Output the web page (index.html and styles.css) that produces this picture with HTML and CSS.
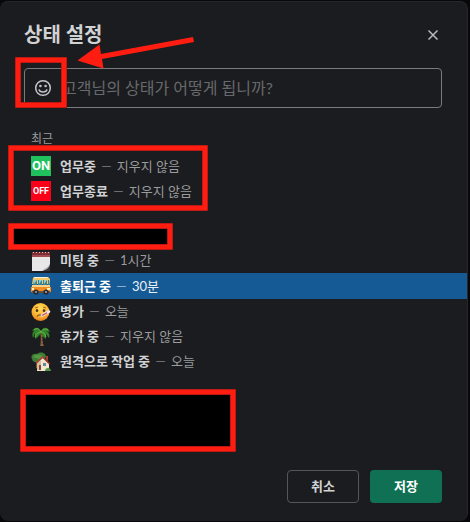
FILE: index.html
```html
<!DOCTYPE html>
<html lang="ko">
<head>
<meta charset="utf-8">
<title>상태 설정</title>
<link rel="stylesheet" href="styles.css">
</head>
<body>
<main class="dialog">
  <header class="header">
    <h1 class="title">상태 설정</h1>
    <button class="close" type="button" aria-label="닫기">
      <svg width="12" height="12" viewBox="0 0 12 12"><path d="M1.5 1.5l9 9M10.5 1.5l-9 9"/></svg>
    </button>
  </header>

  <div class="field">
    <button class="picker" type="button" aria-label="이모티콘 선택">
      <svg width="18" height="18" viewBox="0 0 18 18">
        <circle class="line" cx="9" cy="9" r="7.3"/>
        <circle class="dot" cx="6.4" cy="7" r="1.3"/>
        <circle class="dot" cx="11.6" cy="7" r="1.3"/>
        <path class="line" d="M5 10.3c.7 3.6 7.3 3.6 8 0"/>
      </svg>
    </button>
    <input class="input" type="text" aria-label="상태" placeholder="고객님의 상태가 어떻게 됩니까?">
  </div>

  <h2 class="group">최근</h2>
  <ul class="list">
    <li><button class="row" type="button">
      <span class="badge on">ON</span>
      <span class="label"><strong>업무중</strong> <span class="dash">—</span> 지우지 않음</span>
    </button></li>
    <li><button class="row" type="button">
      <span class="badge off">OFF</span>
      <span class="label"><strong>업무종료</strong> <span class="dash">—</span> 지우지 않음</span>
    </button></li>
  </ul>

  <ul class="list presets">
    <li><button class="row" type="button">
      <svg class="emoji" viewBox="0 0 20 20">
        <path fill="#e9e8e9" d="M1 4h18v16H1z"/>
        <path fill="#7e2d35" d="M1 1h18v4H1z"/>
        <path fill="#a34b52" d="M1 4h18v2H1z"/>
        <path stroke="#d8c8cb" stroke-width="1" stroke-dasharray="1 2" d="M2 1.5h16"/>
        <path fill="#34363a" d="M19 13v7h-8c3-1 3-2 4-2 2-1 3-3 4-5z"/>
        <path fill="#b9b9bc" d="M10 20c4-1 3-3 5-3 2-1 3-3 4-4-1 4-3 6-9 7z"/>
      </svg>
      <span class="label"><strong>미팅 중</strong> <span class="dash">—</span> 1시간</span>
    </button></li>
    <li><button class="row selected" type="button">
      <svg class="emoji" viewBox="0 0 20 20">
        <path fill="#f4c869" d="M3 1h14l2 2v5H1l1-6z"/>
        <path fill="#eef0e4" d="M3 1h13l1 1H3z"/>
        <path fill="#3b8295" d="M3 4h3v6H2zM7 4h4v6H7zM12 4h4v6h-4zM17 4h1l1 6h-2z"/>
        <path fill="#8bd1d8" d="M3 4h3L3 8zM8 4h3L8 8zM13 4h3l-3 4z"/>
        <path fill="#f7d48b" d="M1 9h18v3H1z"/>
        <path fill="#f28b20" d="M0 11h20v5H0z"/>
        <path fill="#fff0b2" d="M1 12h2v2H1zM16 12h3v2h-3z"/>
        <path fill="#665047" d="M1 15h18v2H1z"/>
        <circle cx="5" cy="16" r="2.6" fill="#25282d"/><circle cx="5" cy="16" r="1.1" fill="#9ba1a8"/>
        <circle cx="15" cy="16" r="2.6" fill="#25282d"/><circle cx="15" cy="16" r="1.1" fill="#9ba1a8"/>
      </svg>
      <span class="label"><strong>출퇴근 중</strong> <span class="dash">—</span> 30분</span>
    </button></li>
    <li><button class="row" type="button">
      <svg class="emoji" viewBox="0 0 20 20">
        <defs><radialGradient id="face" cx=".5" cy=".3" r=".7"><stop offset="0" stop-color="#ffdc55"/><stop offset=".65" stop-color="#fbb532"/><stop offset="1" stop-color="#e67a19"/></radialGradient></defs>
        <circle cx="9.5" cy="10" r="9" fill="url(#face)"/>
        <path fill="none" stroke="#a65f1c" d="M4 6l3-1M12 5l3 1"/>
        <ellipse cx="6" cy="8.5" rx="1.3" ry="1.5" fill="#59331c"/>
        <ellipse cx="13" cy="8.5" rx="1.3" ry="1.5" fill="#59331c"/>
        <path fill="none" stroke="#93501d" stroke-width="1.3" d="M6 14.5c1.5-2 4-2 5.500-.5"/>
        <path stroke="#e9e3ef" stroke-width="2.6" stroke-linecap="round" d="M11 13.5l7-4"/>
        <path stroke="#d5424b" stroke-width="1.2" d="M11 13.5l5-2.8"/>
      </svg>
      <span class="label"><strong>병가</strong> <span class="dash">—</span> 오늘</span>
    </button></li>
    <li><button class="row" type="button">
      <svg class="emoji" viewBox="0 0 20 20">
        <path fill="#765034" d="M9 6h3c-1 4-1 9 1 13H9c1-4 1-9 0-13z"/>
        <path stroke="#a7794f" d="M10 9h1.500M10 12h1.500M10 15h1.500M10 18h2"/>
        <path fill="#34842b" d="M10 5C8-1 3 0 1 4l3-1c-3 2-3 5-2 8l2-5v6c2-1 4-3 6-6 1 3 3 5 5 6V7l3 4c1-3 0-6-3-7l4 1c-2-5-7-6-9 0z"/>
        <path fill="none" stroke="#68b945" d="M10 5C8 1 5 1 3 3M10 5c-3 0-5 2-6 5M10 5c2-4 5-3 7-2M10 5c3 0 4 2 5 5"/>
      </svg>
      <span class="label"><strong>휴가 중</strong> <span class="dash">—</span> 지우지 않음</span>
    </button></li>
    <li><button class="row" type="button">
      <svg class="emoji" viewBox="0 0 20 20">
        <path fill="#3d7d34" d="M1 7c-2-4 2-6 5-5 4-3 9-1 9 3l-6 5c-3 1-7 1-8-3z"/>
        <path fill="#579845" d="M2 5c2-3 5-2 7-2l3 1-4 3z"/>
        <path fill="#775138" d="M5 9h2v7H5z"/>
        <path fill="#f3e6cf" d="M6 11l6-5 6 6v7H6z"/>
        <path fill="#d6bb9c" d="M6 11l4-3v10H6z"/>
        <path fill="none" stroke="#b34135" stroke-width="1.4" d="M5.500 11l6-6 7 7"/>
        <path fill="#a8433b" d="M15 4h2v5l-2-2z"/>
        <path fill="#7d4a3a" d="M8 13h2v5H8z"/>
        <path fill="#5f88a0" d="M12 11h3v3h-3z"/>
        <path fill="#529344" d="M14 19c0-4 6-4 6 0z"/>
      </svg>
      <span class="label"><strong>원격으로 작업 중</strong> <span class="dash">—</span> 오늘</span>
    </button></li>
  </ul>

  <footer class="footer">
    <button class="btn cancel" type="button">취소</button>
    <button class="btn save" type="button">저장</button>
  </footer>

  <svg class="marks" width="470" height="522" viewBox="0 0 470 522" aria-hidden="true">
    <path fill="#000" d="M11 226h160v22H11zM23 392h210v57H23z"/>
    <g class="edge">
      <rect x="18" y="60" width="46" height="45"/>
      <rect x="11" y="148" width="194" height="60"/>
      <rect x="11" y="226" width="159" height="21"/>
      <rect x="23" y="392" width="210" height="57"/>
    </g>
    <g class="mark">
      <rect x="18" y="60" width="46" height="45"/>
      <rect x="11" y="148" width="194" height="60"/>
      <rect x="11" y="226" width="159" height="21"/>
      <rect x="23" y="392" width="210" height="57"/>
    </g>
    <path class="arrow" d="M77.500 60.500L99.500 44.500l1.500 9.500 92-17 1 5-92 17 1.500 9.500z"/>
  </svg>
</main>
</body>
</html>
```
FILE: styles.css
```css
* {
  box-sizing: border-box;
}

body {
  margin: 0;
  padding: 1px 2px 1px 0;
  background: #08080a;
  font-family: Lato, "Noto Sans CJK KR", sans-serif;
  font-size: 13px;
  color: #9a9b9d;
}

button,
input {
  margin: 0;
  padding: 0;
  border: 0;
  background: none;
  color: inherit;
  font: inherit;
}

.dialog {
  min-height: calc(100vh - 2px);
  border: 1px solid #26272a;
  border-width: 1px 1px 0 0;
  border-radius: 8px;
  background: #1b1c1f;
}

.header {
  display: flex;
  align-items: center;
  justify-content: space-between;
  padding: 16px 25px 0 24px;
}

.title {
  margin: 0;
  padding-bottom: 2px;
  font-size: 20px;
  line-height: 32px;
  color: #d1d2d3;
}

.close {
  display: flex;
  padding: 3px;
}

.close svg {
  fill: none;
  stroke: #b9babc;
  stroke-width: 1.5;
}

.field {
  display: flex;
  height: 40px;
  margin: 16px 25px 0 24px;
  border: 1px solid #797a7d;
  border-radius: 4px;
}

.picker {
  display: flex;
  flex: none;
  align-items: center;
  justify-content: center;
  width: 36px;
}

.line {
  fill: none;
  stroke: #c4c5c6;
  stroke-width: 1.5;
}

.dot {
  fill: #c4c5c6;
}

.input {
  flex: 1;
  min-width: 0;
  padding: 0 0 2px 1px;
  font-size: 16px;
  outline: none;
}

.input::placeholder {
  color: #68696c;
  opacity: 1;
}

.group {
  margin: 21px 31px 5px;
  font-size: 12px;
  font-weight: 400;
  line-height: 20px;
}

.list {
  margin: 0;
  padding: 0;
  list-style: none;
}

.presets {
  margin-top: 44px;
}

.row {
  display: flex;
  align-items: center;
  gap: 9px;
  width: 100%;
  height: 25px;
  padding: 0 31px;
  text-align: left;
  white-space: nowrap;
}

.label,
.badge {
  margin-bottom: 2px;
}

.row strong {
  color: #d1d2d3;
}

.dash {
  margin: 0 2px;
  color: #6d6e71;
}

.selected {
  height: 26px;
  background: #155a94;
  color: #e8eff5;
}

.selected strong {
  color: #fff;
}

.selected .dash {
  color: #8fb0cc;
}

.emoji {
  flex: none;
  width: 20px;
  height: 20px;
}

.badge {
  flex: none;
  width: 20px;
  height: 20px;
  color: #fff;
  font-family: Roboto, sans-serif;
  font-weight: 700;
  line-height: 20px;
  text-align: center;
}

.on {
  background: #20c05c;
  font-size: 13px;
}

.off {
  background: #fb0019;
  font-size: 9px;
}

.footer {
  display: flex;
  justify-content: flex-end;
  gap: 11px;
  padding: 96px 25px 18px;
}

.btn {
  width: 72px;
  height: 33px;
  padding-bottom: 2px;
  border-radius: 4px;
  font-weight: 700;
}

.cancel {
  border: 1px solid #55565a;
  color: #d1d2d3;
}

.save {
  background: #107053;
  color: #fff;
}

.marks {
  position: absolute;
  top: 0;
  left: 0;
  pointer-events: none;
}

.edge {
  fill: none;
  stroke: #7d1712;
  stroke-width: 6;
}

.mark {
  fill: none;
  stroke: #ff1d12;
  stroke-width: 5;
}

.arrow {
  fill: #ff1d12;
}
```
